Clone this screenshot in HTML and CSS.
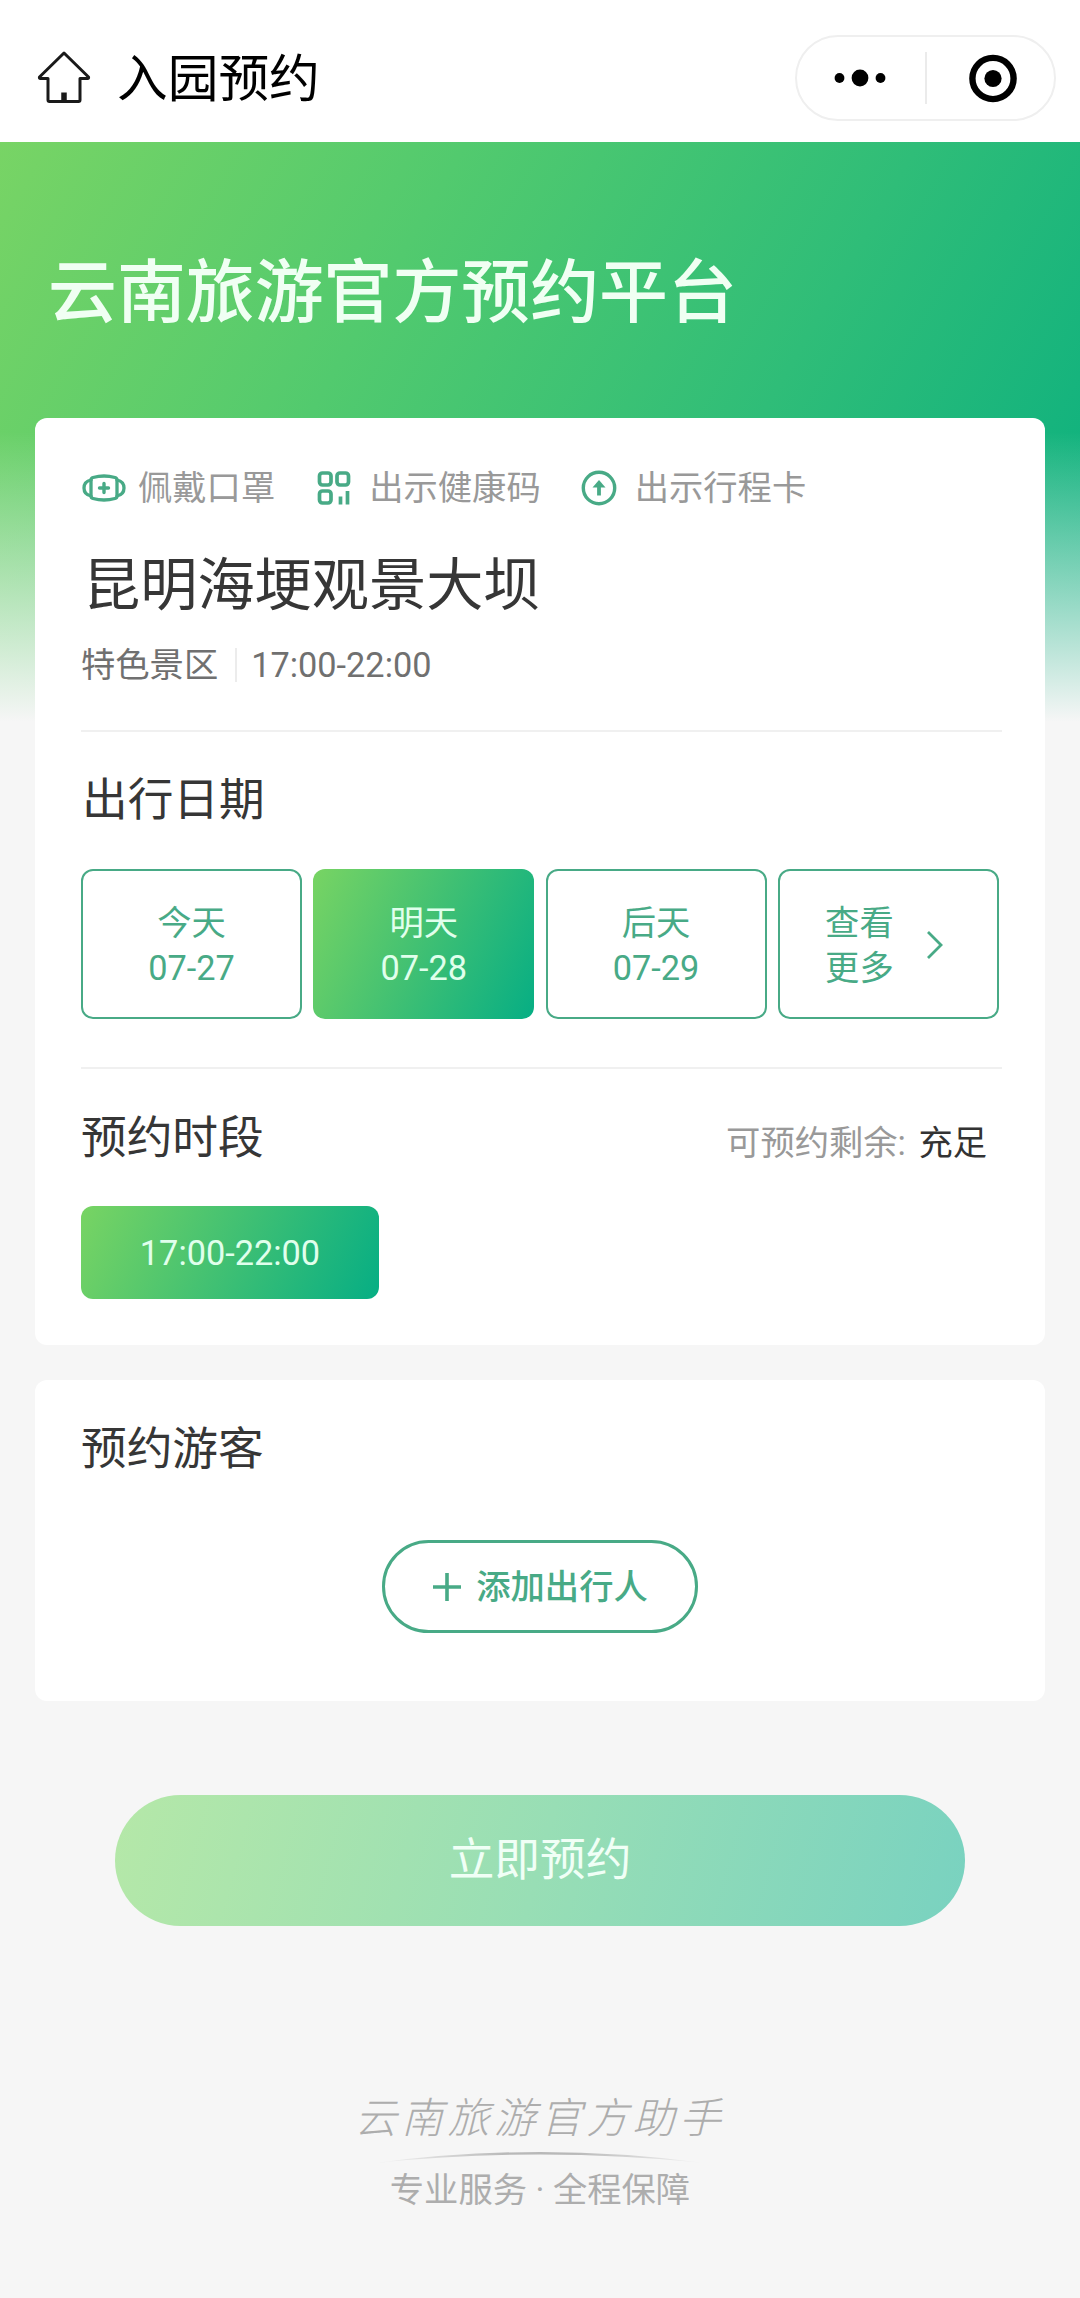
FILE: index.html
```html
<!DOCTYPE html>
<html lang="zh-CN">
<head>
<meta charset="utf-8">
<title>入园预约</title>
<link rel="stylesheet" href="styles.css">
</head>
<body>
<header class="navbar">
  <svg class="home" width="54" height="54" viewBox="0 0 54 54" fill="none" stroke="#1a1a1a" stroke-width="3" stroke-linejoin="round">
    <path d="M27 3 L51.500 27 Q52 28.500 50.500 28.500 H43 V50 Q43 51.500 41.500 51.500 H12.500 Q11 51.500 11 50 V28.500 H3.500 Q2 28.500 2.500 27 Z"/>
    <path d="M27 51 V42.500" stroke-width="5.500"/>
  </svg>
  <h1 class="nav-title">入园预约</h1>
  <div class="capsule">
    <svg class="capsule-more" width="128" height="84" viewBox="0 0 128 84">
      <circle cx="42.500" cy="42" r="4.900"/><circle cx="63" cy="42" r="8.400"/><circle cx="83.500" cy="42" r="4.900"/>
    </svg>
    <i class="capsule-line"></i>
    <svg class="capsule-close" width="127" height="84" viewBox="0 0 127 84">
      <circle cx="66" cy="42.500" r="20.600" fill="none" stroke="#000" stroke-width="6.400"/><circle cx="66" cy="42.500" r="8.600"/>
    </svg>
  </div>
</header>
<main class="page">
  <h2 class="banner-title">云南旅游官方预约平台</h2>
  <section class="card booking">
    <div class="tips">
      <svg class="tip-mask" width="46" height="34" viewBox="0 0 46 34" fill="none" stroke="#48aa86" stroke-width="3.300" stroke-linecap="round">
        <path d="M10 9 Q10 7 12 6.500 Q23 3.500 34 6.500 Q36 7 36 9 V25 Q36 27 34 27.500 Q23 30.500 12 27.500 Q10 27 10 25 Z"/>
        <path d="M10 9 Q3 10.500 3 17 Q3 23.500 10 25 M36 9 Q43 10.500 43 17 Q43 23.500 36 25"/>
        <path d="M23 12.500 V21.500 M18.500 17 H27.500" stroke-width="3.400"/>
      </svg>
      <span class="tip-text">佩戴口罩</span>
      <svg class="tip-code" width="34" height="34" viewBox="0 0 34 34" fill="none" stroke="#48aa86" stroke-width="3.700">
        <rect x="2.500" y="2" width="11.500" height="12" rx="3"/>
        <rect x="20" y="2" width="11.500" height="12" rx="3"/>
        <rect x="2.500" y="20" width="11.500" height="12" rx="3"/>
        <path d="M23.500 25.500 V33.500 M30.500 20 V33.500"/>
      </svg>
      <span class="tip-text">出示健康码</span>
      <svg class="tip-trip" width="36" height="36" viewBox="0 0 36 36" fill="none" stroke="#48aa86" stroke-width="3.400">
        <circle cx="18" cy="18" r="15.700"/>
        <path d="M18 25.500 V13" stroke-width="3.800"/>
        <path d="M18 10 L24.500 17.500 H11.500 Z" fill="#48aa86" stroke="none"/>
      </svg>
      <span class="tip-text">出示行程卡</span>
    </div>
    <h3 class="place">昆明海埂观景大坝</h3>
    <div class="meta"><span>特色景区</span><i class="meta-line"></i><span>17:00-22:00</span></div>
    <hr class="rule rule-first">
    <h4 class="section-title title-date">出行日期</h4>
    <div class="dates">
      <div class="date"><span>今天</span><span>07-27</span></div>
      <div class="date date-active"><span>明天</span><span>07-28</span></div>
      <div class="date"><span>后天</span><span>07-29</span></div>
      <div class="date date-more">
        <div class="more-text"><span>查看</span><span>更多</span></div>
        <svg width="18" height="30" viewBox="0 0 18 30" fill="none" stroke="#48aa86" stroke-width="2.800"><path d="M2 2 L15 15 L2 28"/></svg>
      </div>
    </div>
    <hr class="rule rule-second">
    <div class="section-head">
      <h4 class="section-title">预约时段</h4>
      <p class="remain">可预约剩余: <b>充足</b></p>
    </div>
    <div class="slot">17:00-22:00</div>
  </section>
  <section class="card visitors">
    <h4 class="section-title">预约游客</h4>
    <button class="add">
      <svg width="30" height="30" viewBox="0 0 30 30" stroke="#48aa86" stroke-width="3.600"><path d="M15 1 V29 M1 15 H29"/></svg>
      <span>添加出行人</span>
    </button>
  </section>
  <button class="submit">立即预约</button>
  <footer class="footer">
    <p class="brand">云南旅游官方助手</p>
    <svg class="swoosh" width="330" height="14" viewBox="0 0 330 14">
      <defs><linearGradient id="fade"><stop offset="0" stop-color="#b8b8b8" stop-opacity="0"/><stop offset=".4" stop-color="#b8b8b8"/><stop offset=".6" stop-color="#b8b8b8"/><stop offset="1" stop-color="#b8b8b8" stop-opacity="0"/></linearGradient></defs>
      <path d="M0 12 Q165 -10 330 12 Q165 -5 0 12 Z" fill="url(#fade)"/>
    </svg>
    <p class="slogan">专业服务 · 全程保障</p>
  </footer>
</main>
</body>
</html>
```
FILE: styles.css
```css
* { box-sizing: border-box; margin: 0; padding: 0; }
body {
  width: 1080px;
  min-height: 2298px;
  background: #f6f6f6;
  color: #363636;
  font-family: Roboto, "Noto Sans CJK SC", sans-serif;
  font-size: 34.300px;
  line-height: 48px;
}
h1, h2, h3, h4 { font-weight: 400; }
svg { display: block; flex: none; }
button { font: inherit; }

.navbar {
  display: flex;
  align-items: center;
  height: 142px;
  padding: 14px 24px 0 37px;
  background: #fff;
}
.home { margin-top: -2px; }
.nav-title { margin-left: 26px; padding-top: 3px; font-size: 50.700px; line-height: 70px; color: #000; }
.capsule {
  display: flex;
  align-items: center;
  width: 261px;
  height: 86px;
  margin-left: auto;
  border: 2px solid #efefef;
  border-radius: 43px;
}
.capsule-line { flex: none; width: 2px; height: 52px; background: #ebebeb; }

.page {
  height: 2156px;
  padding: 0 35px;
  background:
    linear-gradient(180deg, rgba(246, 246, 246, 0) 50%, #f6f6f6 100%) 0 0 / 100% 580px no-repeat,
    linear-gradient(120deg, #78d465 0%, #52ca6e 33%, #2fbd78 65%, #0bb07f 95%) 0 0 / 100% 579px no-repeat,
    #f6f6f6;
}
.banner-title {
  padding: 102px 0 74px 13px;
  color: #f0fff3;
  font-size: 68.900px;
  font-weight: 500;
  line-height: 100px;
}
.card { background: #fff; border-radius: 12px; }

.booking { height: 927px; padding: 46px 43px 46px 46px; }
.tips { display: flex; align-items: center; height: 48px; color: #999; }
.tip-text { white-space: nowrap; }
.tip-mask { margin-right: 11px; }
.tip-code { margin: 0 18px 0 42px; }
.tip-trip { margin: 0 18px 0 40px; }
.place { margin-top: 34px; padding-left: 2px; font-size: 57.200px; line-height: 80px; }
.meta { display: flex; align-items: center; margin-top: 15px; color: #707070; }
.meta-line { width: 2px; height: 34px; margin: 0 14px 0 17px; background: #ececec; }
.rule { height: 2px; border: 0; background: #f0f0f0; }
.rule-first { margin: 41px 0 38px; }
.rule-second { margin: 48px 0 39px; }
.section-title { padding-top: 1px; font-size: 45.700px; line-height: 59px; }
.title-date { padding: 2px 0 0 1px; line-height: 58px; }
.dates {
  display: grid;
  grid-template-columns: repeat(4, 221px);
  column-gap: 11.300px;
  margin-top: 39px;
}
.date {
  display: flex;
  flex-direction: column;
  align-items: center;
  justify-content: center;
  height: 150px;
  padding-top: 4px;
  border: 2px solid #48aa86;
  border-radius: 12px;
  color: #48aa86;
  line-height: 45px;
}
.date-active, .slot {
  border: 0;
  background: linear-gradient(115deg, #78d463 0%, #40c073 50%, #06ae84 100%);
  color: #e0ffec;
}
.date-more { flex-direction: row; gap: 32px; padding-right: 8px; }
.date-more svg { margin-top: -2px; }
.more-text { display: flex; flex-direction: column; }
.section-head { display: flex; justify-content: space-between; height: 60px; padding-right: 15px; }
.remain { color: #999; line-height: 70px; }
.remain b { margin-left: 4px; font-weight: 400; color: #333; }
.slot {
  width: 298px;
  height: 93px;
  margin-top: 38px;
  padding-top: 2px;
  border-radius: 12px;
  line-height: 91px;
  text-align: center;
}

.visitors { height: 321px; margin-top: 35px; padding: 39px 46px 68px; }
.add {
  display: flex;
  align-items: center;
  justify-content: center;
  gap: 14px;
  width: 316px;
  height: 93px;
  margin: 61px auto 0;
  border: 3px solid #48aa86;
  border-radius: 47px;
  background: #fff;
  color: #48aa86;
  font-weight: 500;
}
.submit {
  display: block;
  width: 850px;
  height: 131px;
  margin: 94px auto 0;
  border: 0;
  border-radius: 66px;
  background: linear-gradient(105deg, #b5e8a8 0%, #98deb5 50%, #79d2c0 100%);
  color: #f0fff6;
  font-size: 45.700px;
}
.footer { display: flex; flex-direction: column; align-items: center; margin-top: 162px; color: #adadad; }
.brand { padding-top: 2px; font-size: 42px; font-style: italic; font-weight: 300; line-height: 58px; letter-spacing: 4.300px; }
.swoosh { margin: 3px 0; }
.slogan { margin-top: -2px; }
```
